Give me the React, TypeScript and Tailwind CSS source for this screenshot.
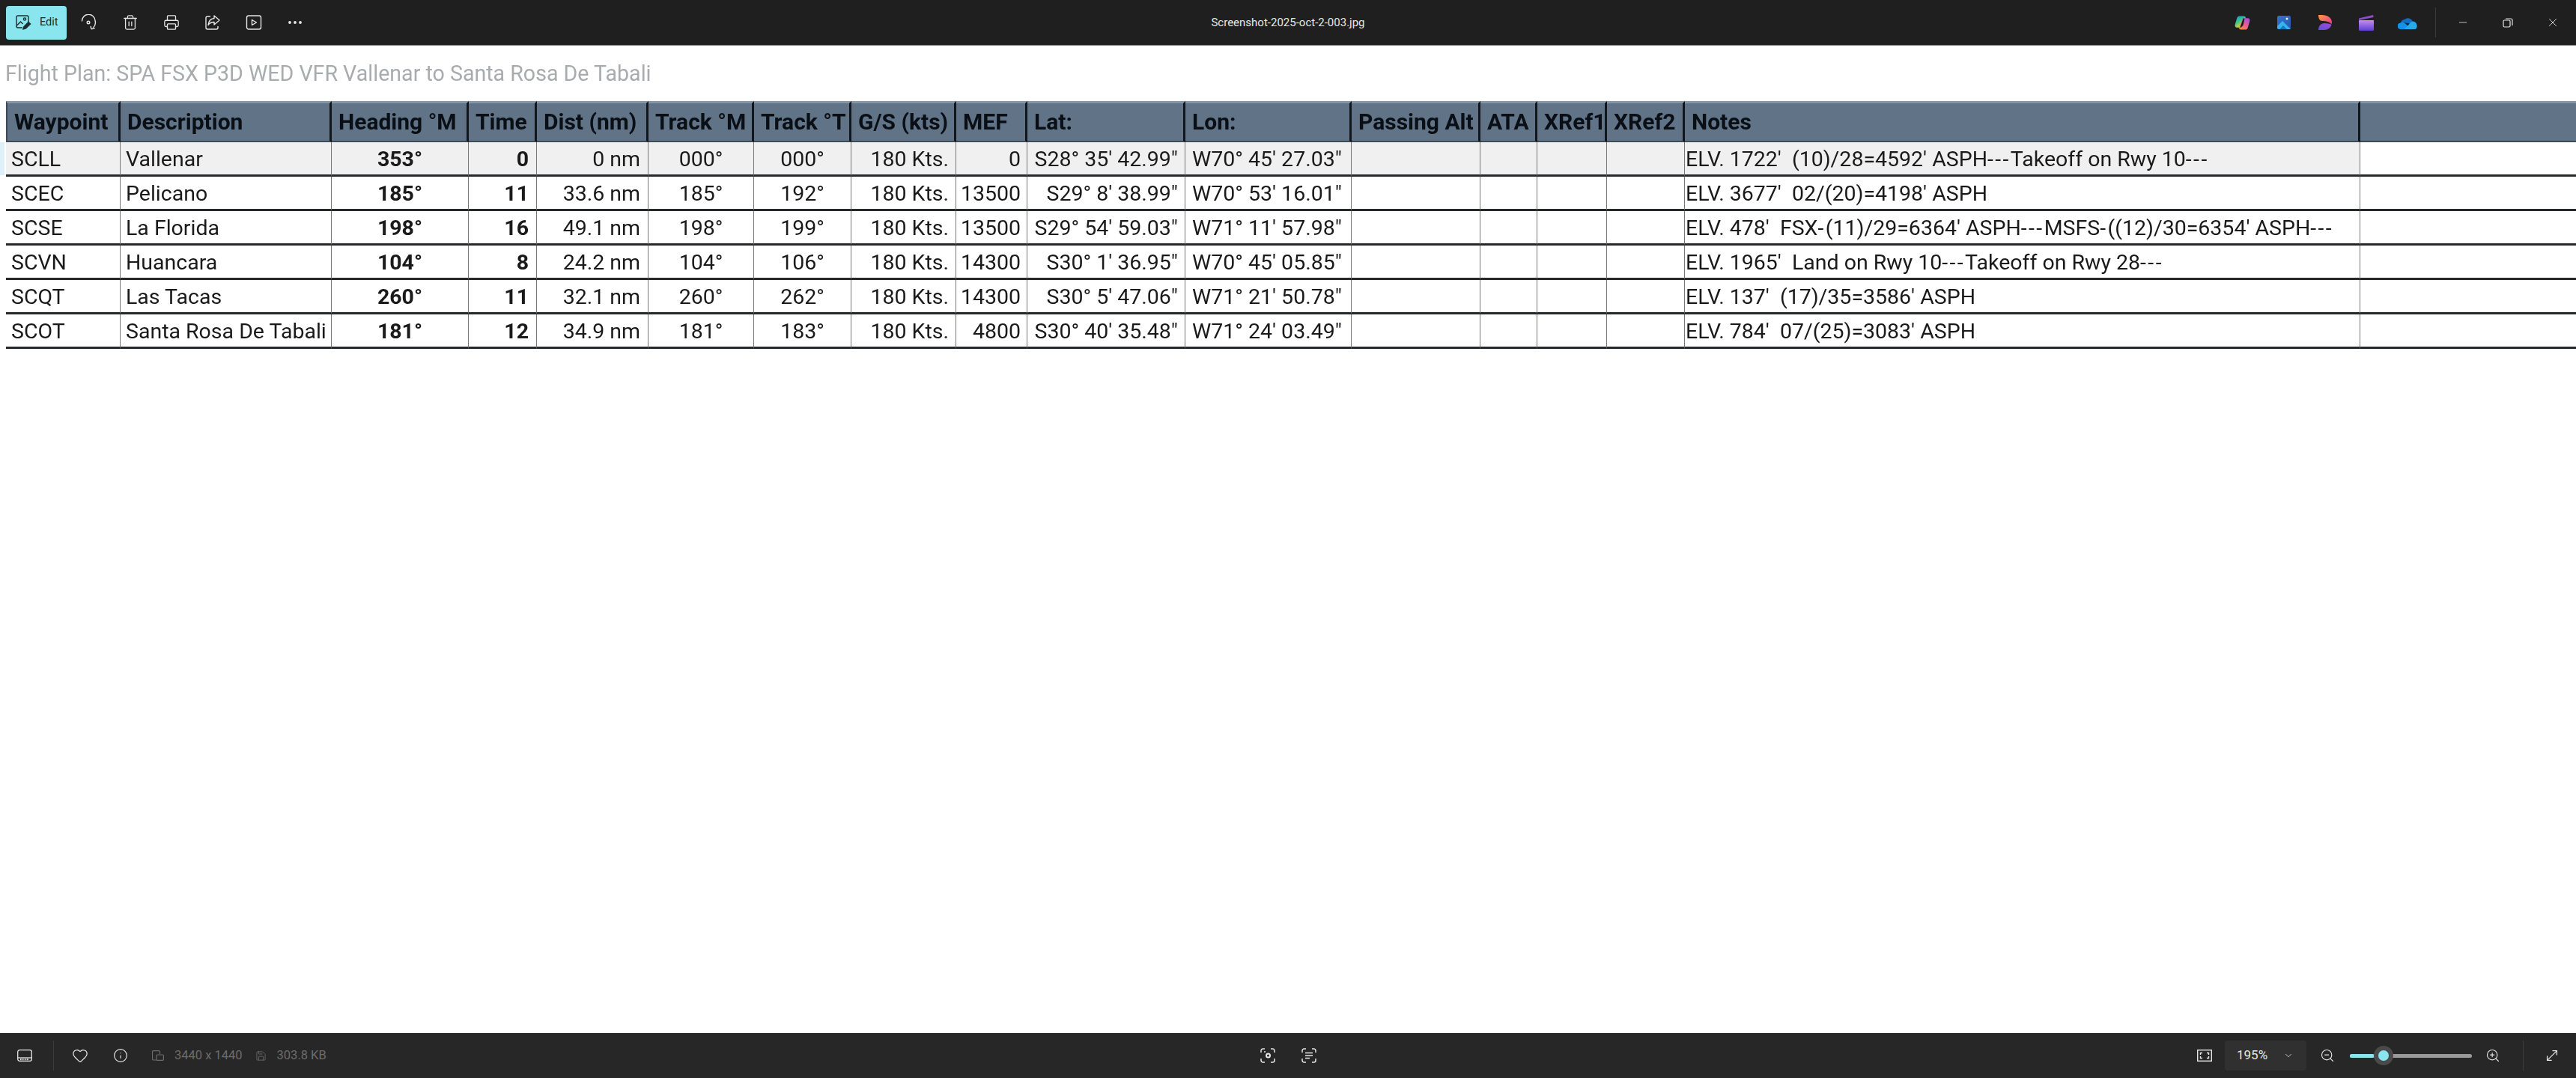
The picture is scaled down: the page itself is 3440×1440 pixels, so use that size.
import { ChevronDown, Ellipsis, Heart, Info, Minus, MoveDiagonal, Printer, Save, Trash2, X, ZoomIn, ZoomOut } from 'lucide-react';

const columns = [
  { title: 'Waypoint', width: 153, align: 'text-left pl-[7px]' },
  { title: 'Description', width: 282, align: 'text-left pl-[7px]' },
  { title: 'Heading °M', width: 183, align: 'text-center font-bold' },
  { title: 'Time', width: 91, align: 'text-right pr-[10px] font-bold' },
  { title: 'Dist (nm)', width: 149, align: 'text-right pr-[10px]' },
  { title: 'Track °M', width: 141, align: 'text-center' },
  { title: 'Track °T', width: 130, align: 'text-center' },
  { title: 'G/S (kts)', width: 140, align: 'text-right pr-[9px]' },
  { title: 'MEF', width: 95, align: 'text-right pr-[8px]' },
  { title: 'Lat:', width: 211, align: 'text-right pr-[9px]' },
  { title: 'Lon:', width: 222, align: 'text-left pl-[9px]' },
  { title: 'Passing Alt', width: 172, align: '' },
  { title: 'ATA', width: 76, align: '' },
  { title: 'XRef1', width: 93, align: '' },
  { title: 'XRef2', width: 104, align: '' },
  { title: 'Notes', width: 902, align: 'text-left pl-px' },
];

const rows = [
  ['SCLL', 'Vallenar', '353°', '0', '0 nm', '000°', '000°', '180 Kts.', '0', 'S28° 35\' 42.99"', 'W70° 45\' 27.03"', '', '', '', '', "ELV. 1722'  (10)/28=4592' ASPH---Takeoff on Rwy 10---"],
  ['SCEC', 'Pelicano', '185°', '11', '33.6 nm', '185°', '192°', '180 Kts.', '13500', 'S29° 8\' 38.99"', 'W70° 53\' 16.01"', '', '', '', '', "ELV. 3677'  02/(20)=4198' ASPH"],
  ['SCSE', 'La Florida', '198°', '16', '49.1 nm', '198°', '199°', '180 Kts.', '13500', 'S29° 54\' 59.03"', 'W71° 11\' 57.98"', '', '', '', '', "ELV. 478'  FSX-(11)/29=6364' ASPH---MSFS-((12)/30=6354' ASPH---"],
  ['SCVN', 'Huancara', '104°', '8', '24.2 nm', '104°', '106°', '180 Kts.', '14300', 'S30° 1\' 36.95"', 'W70° 45\' 05.85"', '', '', '', '', "ELV. 1965'  Land on Rwy 10---Takeoff on Rwy 28---"],
  ['SCQT', 'Las Tacas', '260°', '11', '32.1 nm', '260°', '262°', '180 Kts.', '14300', 'S30° 5\' 47.06"', 'W71° 21\' 50.78"', '', '', '', '', "ELV. 137'  (17)/35=3586' ASPH"],
  ['SCOT', 'Santa Rosa De Tabali', '181°', '12', '34.9 nm', '181°', '183°', '180 Kts.', '4800', 'S30° 40\' 35.48"', 'W71° 24\' 03.49"', '', '', '', '', "ELV. 784'  07/(25)=3083' ASPH"],
];

// hyphen runs are wider in the reference font
function CellText({ value }: { value: string }) {
  return (
    <>
      {value.split(/(-+)/).map((part, i) =>
        i % 2 === 1 ? (
          <span key={i} className="tracking-[2.4px]">{part}</span>
        ) : (
          part
        ),
      )}
    </>
  );
}

function EditIcon() {
  return (
    <svg width="22" height="22" viewBox="0 0 22 22" fill="none" stroke="#1c2b2e" strokeWidth="1.4">
      <path d="M10 18H4a2 2 0 0 1-2-2V4a2 2 0 0 1 2-2h12a2 2 0 0 1 2 2v6" />
      <circle cx="13" cy="6.5" r="1.6" />
      <path d="M2.5 15l5-5 3 3" />
      <path d="M11 20l1-3.5 6-6 2.5 2.5-6 6z" fill="#1c2b2e" />
    </svg>
  );
}

function RotateIcon() {
  return (
    <svg width="22" height="22" viewBox="0 0 22 22" fill="none" stroke="#e6e6e6" strokeWidth="1.4">
      <path d="M1.5 9.5A8.5 8.5 0 0 1 19 8.5c1 3.5 0 7-2.5 9.5" />
      <circle cx="10" cy="11" r="1.8" />
      <path d="M13.5 19.5h5M13.5 19.5l0-4" transform="rotate(-10 15 18)" />
    </svg>
  );
}

function ShareIcon() {
  return (
    <svg width="22" height="22" viewBox="0 0 22 22" fill="none" stroke="#e6e6e6" strokeWidth="1.4">
      <path d="M8 3H4a2 2 0 0 0-2 2v13a2 2 0 0 0 2 2h12a2 2 0 0 0 2-2v-2" />
      <path d="M13 2l7 6-7 6v-3.5c-3.5 0-6 1-8 4 .5-5 3-8.5 8-9z" strokeLinejoin="round" />
    </svg>
  );
}

function SlideshowIcon() {
  return (
    <svg width="22" height="22" viewBox="0 0 22 22" fill="none" stroke="#e6e6e6" strokeWidth="1.4">
      <rect x="1.5" y="2" width="19" height="18" rx="2.5" />
      <path d="M8.5 7.5l6 3.5-6 3.5z" strokeLinejoin="round" />
    </svg>
  );
}

function RestoreIcon() {
  return (
    <svg width="14" height="14" viewBox="0 0 14 14" fill="none" stroke="#e6e6e6" strokeWidth="1.2">
      <rect x="1" y="4" width="9" height="9" rx="1.5" />
      <path d="M4 2h7a2 2 0 0 1 2 2v7" />
    </svg>
  );
}

function CopilotLogo() {
  return (
    <svg width="21" height="19" viewBox="0 0 22 20">
      <defs>
        <linearGradient id="cpA" x1="0" y1="0" x2="0.5" y2="1">
          <stop offset="0" stopColor="#1f8fe8" />
          <stop offset="0.5" stopColor="#34c78a" />
          <stop offset="1" stopColor="#f5d327" />
        </linearGradient>
        <linearGradient id="cpB" x1="0.8" y1="0" x2="0.2" y2="1">
          <stop offset="0" stopColor="#a64fd8" />
          <stop offset="0.6" stopColor="#f0608a" />
          <stop offset="1" stopColor="#f78b32" />
        </linearGradient>
      </defs>
      <path d="M7 .5h6c2 0 3 1.5 2.5 3L11 15c-.5 1-1.500 1.500-3 1.500H3.500C1 16.500 0 14.500.8 12L3.500 3C4 1.500 5 .5 7 .5z" fill="url(#cpA)" />
      <path d="M15 19.500H9c-2 0-3-1.500-2.500-3L11 5c.5-1 1.500-1.500 3-1.500h4.500c2.500 0 3.500 2 2.700 4.500l-2.700 9c-.5 1.500-1.500 2.500-3.500 2.500z" fill="url(#cpB)" />
      <path d="M12.500 3.500L8 15.500c-.3 1 .5 1.500 1 1l3-3 2-8.500c.2-1-.8-2-1.500-1.500z" fill="#1a1a1a" />
    </svg>
  );
}

function PhotosLogo() {
  return (
    <svg width="18" height="18" viewBox="0 0 18 18">
      <defs>
        <linearGradient id="phA" x1="0" y1="0" x2="1" y2="1">
          <stop offset="0" stopColor="#3374c9" />
          <stop offset="1" stopColor="#2a55b0" />
        </linearGradient>
      </defs>
      <rect width="18" height="18" rx="2.5" fill="url(#phA)" />
      <path d="M0 14l7-7 9 9 2 2H2a2 2 0 0 1-2-2z" fill="#35b4f0" />
      <path d="M3 18l5-5 5 5z" fill="#1478c8" />
      <circle cx="13" cy="4" r="1.5" fill="#e8f4ff" />
    </svg>
  );
}

function DesignerLogo() {
  return (
    <svg width="20" height="22" viewBox="0 0 20 22">
      <defs>
        <linearGradient id="dsA" x1="0" y1="0" x2="1" y2="1">
          <stop offset="0" stopColor="#fb9a3c" />
          <stop offset="1" stopColor="#e6398f" />
        </linearGradient>
        <linearGradient id="dsB" x1="0" y1="1" x2="1" y2="0">
          <stop offset="0" stopColor="#5f4fd8" />
          <stop offset="1" stopColor="#a248d6" />
        </linearGradient>
      </defs>
      <path d="M1 1h5c7 0 13 4 13 9.5 0 1-.2 2-.6 2.8C16 10 11 9 6 9 3 9 1 6 1 1z" fill="url(#dsA)" />
      <path d="M1 21c0-5 3-9 8-9 5 0 8 1 9.5 2-1 4-5 7-9.5 7z" fill="url(#dsB)" />
    </svg>
  );
}

function ClipchampLogo() {
  return (
    <svg width="20" height="21" viewBox="0 0 20 21">
      <defs>
        <linearGradient id="clA" x1="0" y1="0" x2="0" y2="1">
          <stop offset="0" stopColor="#c98af0" />
          <stop offset="1" stopColor="#5d3fd3" />
        </linearGradient>
      </defs>
      <path d="M0 4.5L19 0l.7 3L0 7z" fill="#8d4cc9" />
      <rect y="7" width="20" height="14" rx="1" fill="url(#clA)" />
    </svg>
  );
}

function OneDriveLogo() {
  return (
    <svg width="26" height="17" viewBox="0 0 26 17">
      <path d="M4 8a6 6 0 0 1 5-4 7 7 0 0 1 11 2.5A5 5 0 0 1 25 10z" fill="#0f6fc6" />
      <path d="M4 17a4 4 0 0 1-.5-8.5C6 7 8 8 10 9.5L19 17z" fill="#1492e6" />
      <path d="M9 17l5.5-6c2-3 5-5.5 8-3.500 3 1.500 4 5 2.500 8-.5 1-1.500 1.500-2.500 1.500z" fill="#28a8ea" />
    </svg>
  );
}

function FilmstripIcon() {
  return (
    <svg width="20" height="16" viewBox="0 0 20 16" fill="none" stroke="#e6e6e6" strokeWidth="1.3">
      <rect x="0.7" y="0.7" width="18.6" height="14.6" rx="2.5" />
      <path d="M1 11h18" />
      <path d="M4 13.3h12" strokeDasharray="1.6 1.3" strokeWidth="2" />
    </svg>
  );
}

function ImageSizeIcon() {
  return (
    <svg width="16" height="14" viewBox="0 0 16 14" fill="none" stroke="#6c6c6c" strokeWidth="1.2">
      <path d="M6 13H2a1.5 1.5 0 0 1-1.5-1.5V2A1.5 1.5 0 0 1 2 .6h7A1.5 1.5 0 0 1 10.5 2v3" />
      <rect x="6" y="6" width="9.4" height="7.4" rx="1.2" />
    </svg>
  );
}

function ScanIcon({ text }: { text?: boolean }) {
  return (
    <svg width="20" height="20" viewBox="0 0 20 20" fill="none" stroke="#e6e6e6" strokeWidth="1.5">
      <path d="M1 6V3.5A2.5 2.5 0 0 1 3.5 1H6M14 1h2.5A2.5 2.5 0 0 1 19 3.5V6M19 14v2.5a2.5 2.5 0 0 1-2.5 2.5H14M6 19H3.5A2.5 2.5 0 0 1 1 16.5V14" />
      {text ? (
        <path d="M5 6.5h10M5 10h10M5 13.5h6" />
      ) : (
        <>
          <circle cx="10.5" cy="10" r="2.5" strokeWidth="2" />
          <circle cx="6" cy="5" r="1" fill="#e6e6e6" stroke="none" />
        </>
      )}
    </svg>
  );
}

function FitIcon() {
  return (
    <svg width="20" height="16" viewBox="0 0 20 16" fill="none" stroke="#e6e6e6" strokeWidth="1.4">
      <rect x="0.7" y="0.7" width="18.6" height="14.6" />
      <path d="M7 4.5H4.5V7M13 4.5h2.5V7M15.500 9v2.500H13M7 11.500H4.500V9" />
    </svg>
  );
}

export default function App() {
  return (
    <div className="flex h-screen flex-col overflow-hidden bg-white font-['Roboto',sans-serif]">
      <header className="grid h-[61px] shrink-0 grid-cols-[1fr_auto_1fr] items-center border-b border-[#7f7f7f] bg-[#1f1f1f] text-[#e6e6e6]">
        <div className="flex items-center pl-2">
          <button className="flex h-[45px] w-[81px] items-center gap-[11px] rounded bg-[#8ae6ee] pl-3 text-[14.5px] text-[#1c2b2e]">
            <EditIcon />
            Edit
          </button>
          <div className="ml-[2.5px] flex items-center">
            <button className="flex w-[55px] justify-center"><RotateIcon /></button>
            <button className="flex w-[55px] justify-center"><Trash2 size={22} strokeWidth={1.4} /></button>
            <button className="flex w-[55px] justify-center"><Printer size={22} strokeWidth={1.4} /></button>
            <button className="flex w-[55px] justify-center"><ShareIcon /></button>
            <button className="flex w-[55px] justify-center"><SlideshowIcon /></button>
            <button className="flex w-[55px] justify-center"><Ellipsis size={24} strokeWidth={1.8} /></button>
          </div>
        </div>
        <div className="text-[15px]">Screenshot-2025-oct-2-003.jpg</div>
        <div className="flex items-center justify-end pr-px">
          <span className="flex w-[55px] justify-center"><CopilotLogo /></span>
          <span className="flex w-[55px] justify-center"><PhotosLogo /></span>
          <span className="flex w-[55px] justify-center"><DesignerLogo /></span>
          <span className="flex w-[55px] justify-center"><ClipchampLogo /></span>
          <span className="flex w-[55px] justify-center"><OneDriveLogo /></span>
          <span className="ml-[10px] mr-[6px] h-10 w-px bg-[#3a3a3a]" />
          <button className="flex w-[60px] justify-center"><Minus size={16} strokeWidth={1.2} /></button>
          <button className="flex w-[60px] justify-center"><RestoreIcon /></button>
          <button className="flex w-[60px] justify-center"><X size={18} strokeWidth={1.2} /></button>
        </div>
      </header>

      <main className="min-h-0 flex-1">
        <h1 className="h-[74px] pl-[7px] pt-[20px] text-[28.6px] leading-[34px] font-normal text-[#a9abae] blur-[0.4px]">
          Flight Plan: SPA FSX P3D WED VFR Vallenar to Santa Rosa De Tabali
        </h1>
        <div className="flex">
          <div className="w-[8px] shrink-0 pt-[55px]">
            <div className="h-[44px] w-[6px] bg-[#dff0fb]" />
          </div>
          <table className="w-full table-fixed border-separate border-spacing-0 text-[28.5px] leading-[36px] text-[#1a1a1a] blur-[0.4px]">
            <colgroup>
              {columns.map((col) => (
                <col key={col.title} style={{ width: col.width }} />
              ))}
              <col />
            </colgroup>
            <thead>
              <tr className="h-[55px] bg-[#607387]">
                {columns.map((col) => (
                  <th
                    key={col.title}
                    className="border-t-[3px] border-r-[3px] border-b-2 border-t-[#8496a8] border-r-[#10161c] border-b-[#3e4a57] pl-[9px] text-left text-[30px] leading-[40px] font-bold whitespace-nowrap text-[#0a0f16] first:border-l-2 first:border-l-[#3e4a57] last:border-r last:border-r-[#3e4a57]"
                  >
                    {col.title}
                  </th>
                ))}
                <th className="border-t-[3px] border-b-2 border-t-[#8496a8] border-b-[#3e4a57]" />
              </tr>
            </thead>
            <tbody>
              {rows.map((row, i) => (
                <tr key={row[0]} className="h-[46px]">
                  {row.map((value, j) => (
                    <td
                      key={j}
                      className={`overflow-hidden border-r border-b-[3px] border-r-[#777777] border-b-[#26292c] pt-[3px] whitespace-pre ${columns[j].align} ${i === 0 ? 'bg-[#f0f0f0]' : 'bg-white'}`}
                    >
                      <CellText value={value} />
                    </td>
                  ))}
                  <td className="border-b-[3px] border-b-[#26292c] bg-white" />
                </tr>
              ))}
            </tbody>
          </table>
        </div>
      </main>

      <footer className="grid h-[60px] shrink-0 grid-cols-[1fr_auto_1fr] items-center bg-[#272727] text-[#e6e6e6]">
        <div className="flex items-center pl-[6px]">
          <button className="flex w-[54px] justify-center"><FilmstripIcon /></button>
          <span className="ml-[11px] mr-[8px] h-10 w-px bg-[#3c3c3c]" />
          <button className="flex w-[54px] justify-center"><Heart size={22} strokeWidth={1.4} /></button>
          <button className="flex w-[54px] justify-center"><Info size={20} strokeWidth={1.4} /></button>
          <div className="ml-[15px] flex items-center text-[16.5px] text-[#6c6c6c]">
            <ImageSizeIcon />
            <span className="ml-[14px]">3440 x 1440</span>
            <Save className="ml-[17px]" size={15} strokeWidth={1.4} />
            <span className="ml-[14px]">303.8 KB</span>
          </div>
        </div>
        <div className="flex items-center">
          <button className="flex w-[55px] justify-center"><ScanIcon /></button>
          <button className="flex w-[55px] justify-center"><ScanIcon text /></button>
        </div>
        <div className="flex items-center justify-end pr-[5px]">
          <button className="flex w-[54px] justify-center"><FitIcon /></button>
          <button className="flex h-10 w-[109px] items-center justify-between rounded bg-[#303030] pr-[17px] pl-4 text-[17px]">
            195%
            <ChevronDown size={14} strokeWidth={1.4} />
          </button>
          <button className="flex w-[56px] justify-center"><ZoomOut size={20} strokeWidth={1.4} /></button>
          <div className="relative ml-[2px] flex h-[5px] w-[163px] rounded-full bg-[#9a9a9a]">
            <div className="w-[32px] rounded-full bg-[#8ae6ee]" />
            <div className="absolute top-[-10.5px] left-[32px] flex size-[26px] items-center justify-center rounded-full bg-[#4a4a4a]">
              <div className="size-[14px] rounded-full bg-[#8ae6ee]" />
            </div>
          </div>
          <button className="flex w-[56px] justify-center"><ZoomIn size={20} strokeWidth={1.4} /></button>
          <span className="ml-[12px] h-10 w-px bg-[#3c3c3c]" />
          <button className="ml-[11px] flex w-[54px] justify-center"><MoveDiagonal size={22} strokeWidth={1.4} /></button>
        </div>
      </footer>
    </div>
  );
}
